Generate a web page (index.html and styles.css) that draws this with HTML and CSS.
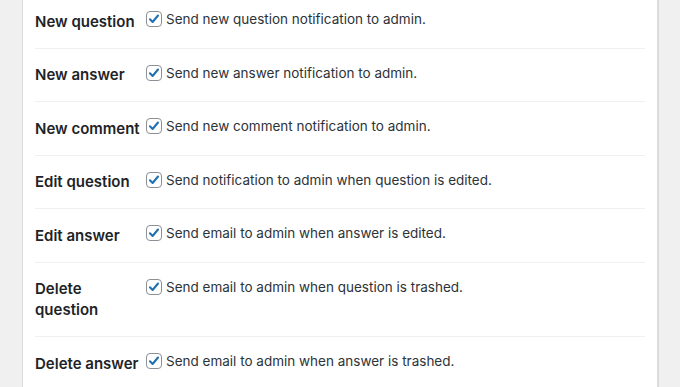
FILE: index.html
```html
<!DOCTYPE html>
<html lang="en">
<head>
  <meta charset="UTF-8">
  <meta name="viewport" content="width=device-width, initial-scale=1.0">
  <title>Email notification settings</title>
  <link rel="stylesheet" href="styles.css">
</head>
<body>
  <div class="panel">
    <table class="form-table">
      <tr>
        <th>New question</th>
        <td><label class="check"><span class="box"><svg viewBox="0 0 16 16" width="16" height="16"><path d="M3.4 8.4l3 3 6.2-7.4" fill="none" stroke="#2271b1" stroke-width="2.4" stroke-linecap="round" stroke-linejoin="round"/></svg></span>Send new question notification to admin.</label></td>
      </tr>
      <tr>
        <th>New answer</th>
        <td><label class="check"><span class="box"><svg viewBox="0 0 16 16" width="16" height="16"><path d="M3.4 8.4l3 3 6.2-7.4" fill="none" stroke="#2271b1" stroke-width="2.4" stroke-linecap="round" stroke-linejoin="round"/></svg></span>Send new answer notification to admin.</label></td>
      </tr>
      <tr>
        <th>New comment</th>
        <td><label class="check"><span class="box"><svg viewBox="0 0 16 16" width="16" height="16"><path d="M3.4 8.4l3 3 6.2-7.4" fill="none" stroke="#2271b1" stroke-width="2.4" stroke-linecap="round" stroke-linejoin="round"/></svg></span>Send new comment notification to admin.</label></td>
      </tr>
      <tr>
        <th>Edit question</th>
        <td><label class="check"><span class="box"><svg viewBox="0 0 16 16" width="16" height="16"><path d="M3.4 8.4l3 3 6.2-7.4" fill="none" stroke="#2271b1" stroke-width="2.4" stroke-linecap="round" stroke-linejoin="round"/></svg></span>Send notification to admin when question is edited.</label></td>
      </tr>
      <tr>
        <th>Edit answer</th>
        <td><label class="check"><span class="box"><svg viewBox="0 0 16 16" width="16" height="16"><path d="M3.4 8.4l3 3 6.2-7.4" fill="none" stroke="#2271b1" stroke-width="2.4" stroke-linecap="round" stroke-linejoin="round"/></svg></span>Send email to admin when answer is edited.</label></td>
      </tr>
      <tr>
        <th>Delete question</th>
        <td><label class="check"><span class="box"><svg viewBox="0 0 16 16" width="16" height="16"><path d="M3.4 8.4l3 3 6.2-7.4" fill="none" stroke="#2271b1" stroke-width="2.4" stroke-linecap="round" stroke-linejoin="round"/></svg></span>Send email to admin when question is trashed.</label></td>
      </tr>
      <tr>
        <th>Delete answer</th>
        <td><label class="check"><span class="box"><svg viewBox="0 0 16 16" width="16" height="16"><path d="M3.4 8.4l3 3 6.2-7.4" fill="none" stroke="#2271b1" stroke-width="2.4" stroke-linecap="round" stroke-linejoin="round"/></svg></span>Send email to admin when answer is trashed.</label></td>
      </tr>
    </table>
  </div>
</body>
</html>
```

FILE: styles.css
```css
body {
  margin: 0;
  background-color: #f0f0f1;
  font-family: Inter, "Liberation Sans", sans-serif;
  color: #1d2327;
  height: 387px;
  overflow: hidden;
}
.panel {
  margin-left: 22px;
  width: 610px;
  min-height: 400px;
  padding: 0 12px;
  margin-top: -5px;
  background-color: #fff;
  border-left: 1px solid #dcdcde;
  border-right: 2px solid #dcdcde;
}
.form-table {
  width: 610px;
  border-collapse: collapse;
}
.form-table tr {
  border-bottom: 1px solid #f0f0f1;
}
.form-table th {
  width: 107px;
  padding: 15.5px 3px 16px 0;
  text-align: left;
  vertical-align: top;
  font-size: 15px;
  font-weight: 600;
  line-height: 21px;
}
.form-table td {
  padding: 14px 0 15px;
  vertical-align: top;
  font-size: 13.5px;
  line-height: 20px;
  color: #2c3338;
}
.check {
  display: flex;
  align-items: center;
}
.box {
  width: 14px;
  height: 14px;
  margin: 0 4px 0 1px;
  border: 1px solid #8c8f94;
  border-radius: 4px;
  background-color: #fff;
  display: flex;
  align-items: center;
  justify-content: center;
  flex-shrink: 0;
}
.box svg {
  display: block;
}
```
